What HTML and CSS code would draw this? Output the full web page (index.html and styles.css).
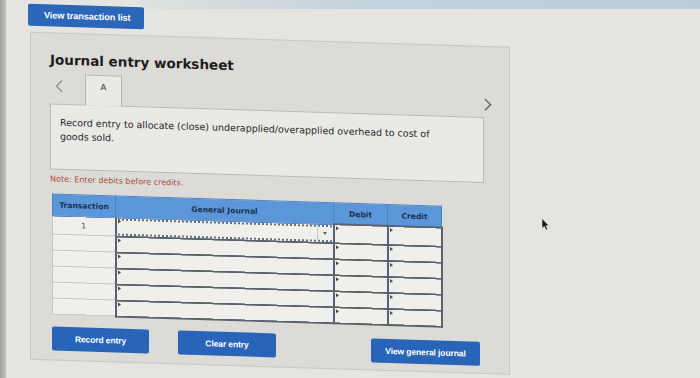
FILE: index.html
```html
<!DOCTYPE html>
<html lang="en">
<head>
<meta charset="utf-8">
<title>Journal entry worksheet</title>
<link rel="stylesheet" href="styles.css">
</head>
<body>
<div class="screen">
  <div class="edge"></div>
  <div class="page">
    <button class="btn btn-top">View transaction list</button>
    <section class="panel">
      <h1 class="title">Journal entry worksheet</h1>
      <div class="tabs">
        <span class="nav prev"><svg width="8" height="13" viewBox="0 0 8 13"><polyline points="7,1 1.5,6.5 7,12" fill="none" stroke="#8e8e8c" stroke-width="1.4"/></svg></span>
        <div class="tab">A</div>
        <span class="nav next"><svg width="8" height="13" viewBox="0 0 8 13"><polyline points="1,1 6.5,6.5 1,12" fill="none" stroke="#6f6f6d" stroke-width="1.6"/></svg></span>
      </div>
      <div class="instr">
        <p>Record entry to allocate (close) underapplied/overapplied overhead to cost of<br>goods sold.</p>
      </div>
      <p class="note">Note: Enter debits before credits.</p>
      <table class="journal">
        <colgroup>
          <col class="c-tx"><col class="c-acct"><col class="c-amt"><col class="c-amt">
        </colgroup>
        <thead>
          <tr><th>Transaction</th><th>General Journal</th><th>Debit</th><th>Credit</th></tr>
        </thead>
        <tbody>
          <tr><td class="tx">1</td><td class="acct first"><div class="select"><span class="arrow"></span></div></td><td class="amt"></td><td class="amt"></td></tr>
          <tr><td class="tx"></td><td class="acct"></td><td class="amt"></td><td class="amt"></td></tr>
          <tr><td class="tx"></td><td class="acct"></td><td class="amt"></td><td class="amt"></td></tr>
          <tr><td class="tx"></td><td class="acct"></td><td class="amt"></td><td class="amt"></td></tr>
          <tr><td class="tx"></td><td class="acct"></td><td class="amt"></td><td class="amt"></td></tr>
          <tr><td class="tx"></td><td class="acct"></td><td class="amt"></td><td class="amt"></td></tr>
        </tbody>
      </table>
      <div class="actions">
        <button class="btn btn-record">Record entry</button>
        <button class="btn btn-clear">Clear entry</button>
        <button class="btn btn-view">View general journal</button>
      </div>
    </section>
  </div>
  <svg class="cursor" width="9" height="13" viewBox="0 0 9 13"><path d="M1 0.5 L1 10.5 L3.3 8.4 L5 12 L6.6 11.3 L5 7.8 L8 7.8 Z" fill="#1a1a1a" stroke="#e8e8e8" stroke-width="0.6"/></svg>
</div>
</body>
</html>
```
FILE: styles.css
```css
html, body {
  margin: 0;
  padding: 0;
  overflow: hidden;
}
body {
  width: 700px;
  height: 378px;
  background: #e5e4e0;
  font-family: "DejaVu Sans", Verdana, sans-serif;
  position: relative;
}
body::before {
  content: "";
  position: absolute;
  top: 0;
  left: 140px;
  right: 0;
  height: 9px;
  background: linear-gradient(to right, rgba(196, 210, 220, 0.2), #c3d2dc 40%, #bccdd9);
}
.screen {
  display: flex;
  align-items: flex-start;
  height: 378px;
  position: relative;
  overflow: hidden;
}
.edge {
  width: 6px;
  height: 378px;
  flex: none;
  background: linear-gradient(to right, #9d9d9a, #c4c4c0);
}
.page {
  flex: none;
  padding-left: 22px;
  transform: skewY(1.8deg);
  transform-origin: 0 0;
}
.btn {
  display: flex;
  align-items: center;
  justify-content: center;
  border: none;
  border-radius: 2px;
  background: #2864b7;
  color: #ffffff;
  font-family: "Liberation Sans", Arial, sans-serif;
  font-weight: bold;
  font-size: 8.5px;
  padding: 0;
  height: 24px;
  letter-spacing: -0.1px;
}
.btn-top {
  margin-top: 3px;
  width: 116px;
  height: 22px;
  justify-content: flex-start;
  padding-left: 16px;
  font-size: 9.2px;
  background: #2b66b9;
}
.panel {
  margin-top: 6px;
  margin-left: 2px;
  width: 480px;
  height: 328px;
  box-sizing: border-box;
  background: #dcdbd7;
  border: 1px solid #c8c8c4;
  padding: 0 0 0 19px;
  display: flex;
  flex-direction: column;
  align-items: flex-start;
}
.title {
  margin: 18px 0 0 0;
  font-size: 13.5px;
  line-height: 17px;
  font-weight: bold;
  color: #1d1d1d;
}
.tabs {
  margin-top: 5px;
  width: 445px;
  height: 31px;
  display: flex;
  align-items: flex-end;
  position: relative;
  z-index: 1;
  margin-bottom: -1px;
}
.nav {
  display: flex;
  align-self: center;
}
.prev {
  margin-left: 5px;
  margin-top: -6px;
}
.next {
  margin-left: auto;
  margin-right: 3px;
  margin-top: 4px;
}
.tab {
  margin-left: 22px;
  width: 37px;
  height: 31px;
  box-sizing: border-box;
  background: #e9e9e6;
  border: 1px solid #b5b5b1;
  border-bottom: none;
  text-align: center;
  font-size: 8.5px;
  line-height: 10px;
  padding-top: 6px;
  color: #333;
}
.instr {
  width: 434px;
  height: 66px;
  box-sizing: border-box;
  background: #e9e9e6;
  border: 1px solid #b9b9b5;
  padding: 11px 0 0 9px;
}
.instr p {
  margin: 0;
  font-size: 9.5px;
  line-height: 14px;
  color: #2a2a2a;
}
.note {
  margin: 5px 0 0 0;
  font-size: 8px;
  line-height: 9px;
  color: #a9503f;
}
.journal {
  margin: 10px 0 0 2px;
  border-collapse: collapse;
  table-layout: fixed;
  width: 390px;
}
.c-tx { width: 63px; }
.c-acct { width: 218px; }
.c-amt { width: 54px; }
.journal th {
  height: 20px;
  padding: 0;
  background: #5b96d9;
  border: 1px solid #4b84c6;
  color: #1c3252;
  font-size: 7.6px;
  font-weight: bold;
  text-align: center;
}
.journal td {
  height: 14px;
  padding: 0;
  background: #f0efeb;
  position: relative;
}
.journal td.tx {
  border: 1px solid #c8c8c4;
  text-align: center;
  font-size: 7.5px;
  color: #444;
}
.journal td.acct,
.journal td.amt {
  border: 2px solid #58626e;
}
.journal td.acct::before,
.journal td.amt::before {
  content: "";
  position: absolute;
  top: 1px;
  left: 1px;
  border-left: 3px solid #3d4a5c;
  border-top: 2px solid transparent;
  border-bottom: 2px solid transparent;
}
.journal td.acct.first {
  border-top: 1px solid #4b84c6;
}
.select {
  height: 13px;
  margin: 0 1px;
  border-top: 2px dotted #6a7078;
  border-bottom: 2px dotted #6a7078;
  display: flex;
  justify-content: flex-end;
}
.arrow {
  width: 14px;
  border-left: 1px solid #c8c8c4;
  display: flex;
  align-items: center;
  justify-content: center;
}
.arrow::after {
  content: "";
  border-top: 3px solid #666;
  border-left: 2.5px solid transparent;
  border-right: 2.5px solid transparent;
}
.actions {
  margin: 11px 0 0 2px;
  display: flex;
  align-items: flex-start;
}
.btn-record { width: 97px; }
.btn-clear { width: 98px; margin-left: 29px; }
.btn-view { width: 109px; margin-left: 95px; margin-top: 2px; }
.cursor {
  position: absolute;
  left: 541px;
  top: 218px;
}
```
